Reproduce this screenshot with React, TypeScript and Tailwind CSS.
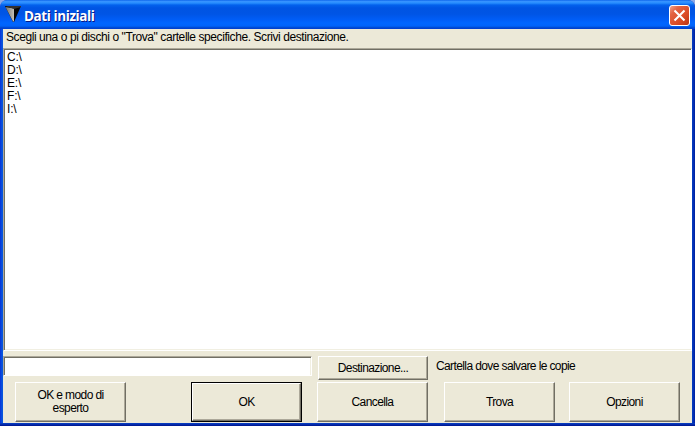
import type { ReactNode } from "react";

const drives = ["C:\\", "D:\\", "E:\\", "F:\\", "I:\\"];

function PushButton({ className, children }: { className: string; children: ReactNode }) {
  return (
    <button
      className={`flex shrink-0 items-center justify-center border border-t-white border-l-white border-r-[#716f64] border-b-[#716f64] bg-[#ece9d8] text-center leading-[13px] tracking-[-0.6px] shadow-[inset_-1px_-1px_0_#aca899] ${className}`}
    >
      {children}
    </button>
  );
}

function TitleBar() {
  return (
    <header className="flex h-[29px] shrink-0 items-center rounded-t-[7px] bg-[linear-gradient(180deg,#0058e6_0px,#3a93ff_1px,#288eff_3px,#0361ed_5px,#0054e3_8px,#0055e5_14px,#005cf5_19px,#0066ff_23px,#0063fa_26px,#0044c8_28px,#003dd7_29px)] pr-[5px] pl-[5px]">
      <svg className="mb-px h-4 w-4 shrink-0" viewBox="0 0 16 16">
        <defs>
          <linearGradient id="facet" x1="0" y1="0" x2="1" y2="0">
            <stop offset="0" stopColor="#77746f" />
            <stop offset="1" stopColor="#c4c0b6" />
          </linearGradient>
        </defs>
        <path d="M0 0H16L9 16H8Z" fill="#050505" />
        <path d="M0.5 1L9 2.5V15.5H8Z" fill="url(#facet)" />
        <path d="M0 0H16V1L9 3Z" fill="#33312f" />
      </svg>
      <h1 className="mt-[2px] ml-[3px] flex-1 font-['Open_Sans',sans-serif] text-[13.5px] leading-4 font-bold tracking-[-0.42px] whitespace-nowrap text-white [text-shadow:1px_1px_#0a1883]">
        Dati iniziali
      </h1>
      <button
        aria-label="Chiudi"
        className="mt-[2px] flex h-[21px] w-[21px] items-center justify-center rounded-[3px] border border-white bg-[linear-gradient(135deg,#f0a38b_0%,#e36443_25%,#da4b25_65%,#b93512_100%)]"
      >
        <svg className="h-[13px] w-[13px]" viewBox="0 0 13 13">
          <path d="M1.5 1.5L11.5 11.5M11.5 1.5L1.5 11.5" stroke="white" strokeWidth="2.1" />
        </svg>
      </button>
    </header>
  );
}

export default function App() {
  return (
    <div className="h-[426px] w-[695px] bg-[#8ba8e8] font-['Liberation_Sans',Arial,sans-serif] text-[12px] leading-[13px] text-black">
      <div className="flex h-full flex-col overflow-hidden rounded-t-[7px] bg-[linear-gradient(90deg,#0831d9_0px,#0855dd_2px,#0855dd_690px,#001ea0_695px)]">
        <TitleBar />
        <main className="mr-[3px] ml-[3px] flex h-[394px] flex-col bg-[#ece9d8]">
          <p className="h-[19px] shrink-0 pt-[2px] pl-[3px] tracking-[-0.42px] whitespace-nowrap">
            Scegli una o pi dischi o "Trova" cartelle specifiche. Scrivi destinazione.
          </p>
          <ul className="h-[303px] shrink-0 border border-t-[#aca899] border-r-white border-b-white border-l-[#aca899] bg-white pt-[2px] pl-[3px] tracking-[-0.2px] shadow-[inset_1px_1px_0_#716f64,inset_0_-1px_0_#f1efe2]">
            {drives.map((drive) => (
              <li key={drive} className="h-[13px]">{drive}</li>
            ))}
          </ul>
          <div className="mt-[5px] flex h-[26px] shrink-0 items-start">
            <input className="h-[20px] w-[309px] border border-t-[#aca899] border-r-white border-b-white border-l-[#aca899] bg-white px-1 shadow-[inset_1px_1px_0_#716f64,inset_-1px_0_0_#f1efe2] outline-none" />
            <PushButton className="ml-[6px] h-[24px] w-[110px]">Destinazione...</PushButton>
            <span className="mt-[4px] ml-[8px] tracking-[-0.61px] whitespace-nowrap">Cartella dove salvare le copie</span>
          </div>
          <div className="flex h-[40px] shrink-0 pl-[12px]">
            <PushButton className="h-[40px] w-[111px]">
              <span>OK e modo di<br />esperto</span>
            </PushButton>
            <div className="ml-[65px] h-[40px] w-[111px] shrink-0 border border-black">
              <PushButton className="h-full w-full">OK</PushButton>
            </div>
            <PushButton className="ml-[15px] h-[40px] w-[111px]">Cancella</PushButton>
            <PushButton className="ml-[16px] h-[40px] w-[111px]">Trova</PushButton>
            <PushButton className="ml-[14px] h-[40px] w-[111px]">Opzioni</PushButton>
          </div>
        </main>
        <div className="h-[3px] shrink-0 bg-[linear-gradient(180deg,#0842c8,#00138c)]" />
      </div>
    </div>
  );
}
